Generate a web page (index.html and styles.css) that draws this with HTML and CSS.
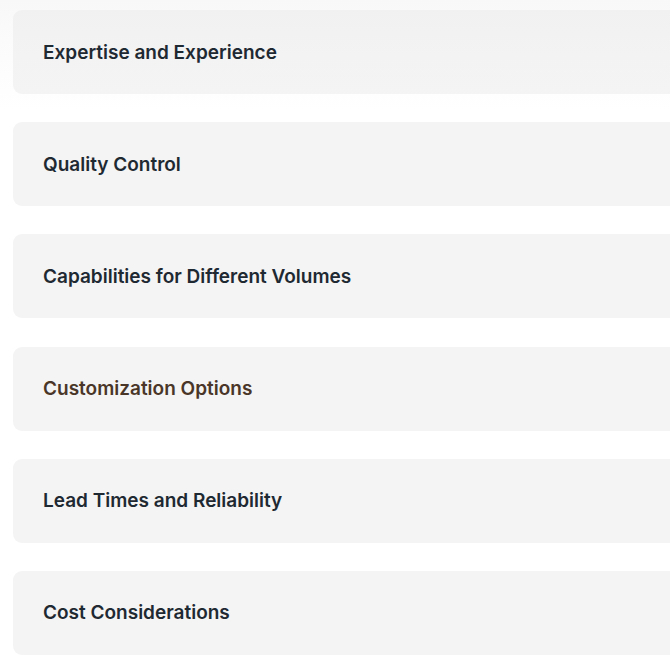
FILE: index.html
```html
<!DOCTYPE html>
<html lang="en">
<head>
<meta charset="utf-8">
<title>FAQ</title>
<link rel="stylesheet" href="styles.css">
</head>
<body>
<div class="accordion">
  <div class="item item-first"><span class="title">Expertise and Experience</span></div>
  <div class="item"><span class="title">Quality Control</span></div>
  <div class="item"><span class="title">Capabilities for Different Volumes</span></div>
  <div class="item"><span class="title title-active">Customization Options</span></div>
  <div class="item"><span class="title">Lead Times and Reliability</span></div>
  <div class="item"><span class="title">Cost Considerations</span></div>
</div>
</body>
</html>
```
FILE: styles.css
```css
html, body {
  margin: 0;
  padding: 0;
}
body {
  width: 670px;
  height: 671px;
  overflow: hidden;
  background: linear-gradient(to bottom, #f8f8f8 0px, #fbfbfb 40px, #ffffff 110px, #ffffff 100%);
  font-family: Inter, "Liberation Sans", sans-serif;
}
.accordion {
  display: flex;
  flex-direction: column;
  gap: 28.2px;
  padding: 10px 0 0 13px;
  width: 720px;
}
.item {
  height: 84px;
  box-sizing: border-box;
  background: #f4f4f4;
  border-radius: 9px;
  display: flex;
  align-items: center;
  padding-left: 30px;
}
.item-first {
  background: linear-gradient(to bottom, #f1f1f1 0%, #f3f3f3 55%, #f4f4f4 100%);
}
.title {
  font-size: 19px;
  font-weight: 600;
  color: #1e2932;
  letter-spacing: 0;
}
.title-active {
  color: #4a3628;
}
```
